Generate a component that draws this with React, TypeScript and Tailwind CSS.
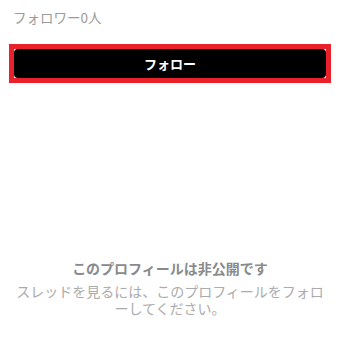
const font = { fontFamily: '"Noto Sans CJK JP", "Noto Sans", sans-serif' }

export default function App() {
  return (
    <div className="w-[340px] h-[356px] bg-white flex flex-col" style={font}>
      {/* follower count */}
      <div className="px-[13px] pt-[7px] text-[13.5px] leading-[20px] text-[#9a9a9a]">
        フォロワー0人
      </div>

      {/* follow button, highlighted */}
      <div className="mt-[17px] mx-[9px] border-[5px] border-[#e8212b] bg-white">
        <button className="w-full h-[29px] rounded-[4px] bg-black text-white text-[13px] font-bold leading-none">
          フォロー
        </button>
      </div>

      {/* private notice */}
      <div className="mt-auto mb-[39px] px-[16px] text-center">
        <p className="text-[14px] font-bold leading-[18px] text-[#8a8a8a]">
          このプロフィールは非公開です
        </p>
        <p className="mt-[6px] text-[14px] leading-[17px] text-[#ababab]">
          スレッドを見るには、このプロフィールをフォローしてください。
        </p>
      </div>
    </div>
  )
}
